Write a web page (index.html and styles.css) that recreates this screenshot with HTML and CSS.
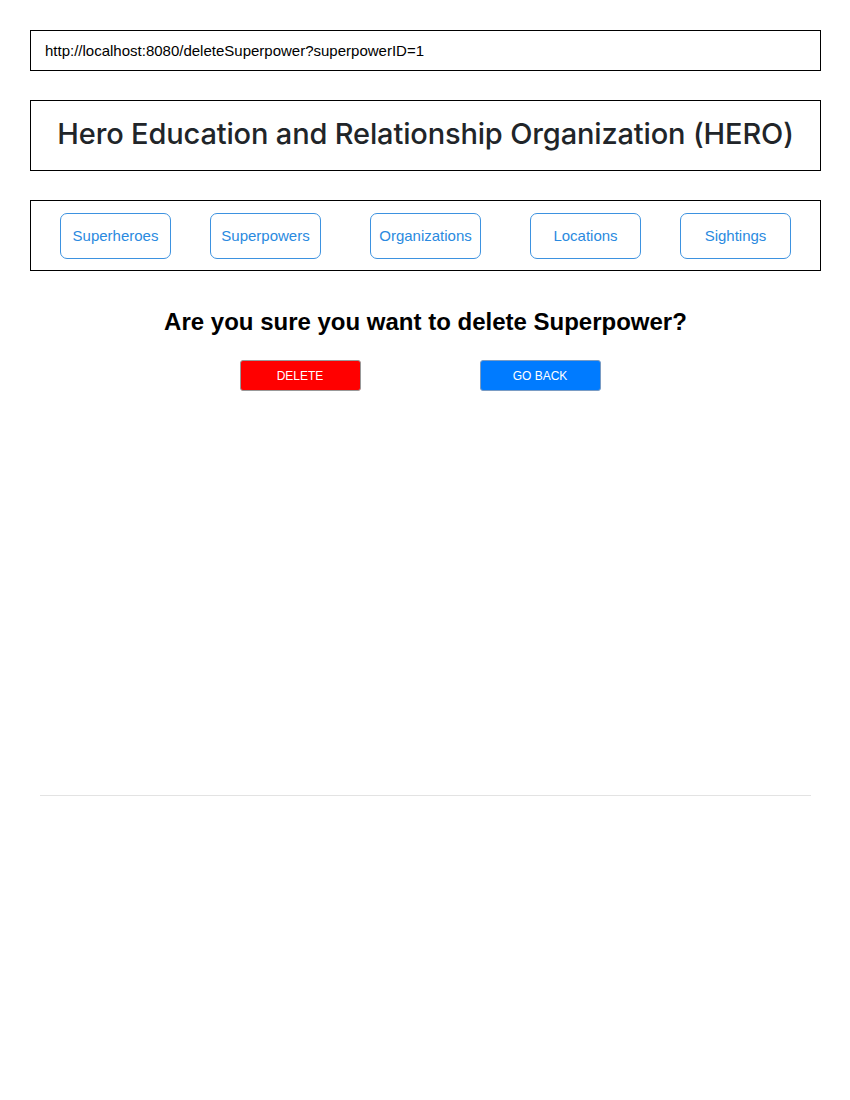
FILE: index.html
```html
<!DOCTYPE html>
<html>
<head>
<meta charset="utf-8">
<link rel="stylesheet" href="styles.css">
</head>
<body>
<div class="page">
  <div class="box url">http://localhost:8080/deleteSuperpower?superpowerID=1</div>
  <div class="box title"><h1>Hero Education and Relationship Organization (HERO)</h1></div>
  <div class="box nav">
    <a class="navbtn n1">Superheroes</a>
    <a class="navbtn n2">Superpowers</a>
    <a class="navbtn n3">Organizations</a>
    <a class="navbtn n4">Locations</a>
    <a class="navbtn n5">Sightings</a>
  </div>
  <h2 class="question">Are you sure you want to delete Superpower?</h2>
  <div class="actions">
    <button class="btn delete">DELETE</button>
    <button class="btn back">GO BACK</button>
  </div>
  <div class="spacer"></div>
  <hr class="rule">
</div>
</body>
</html>
```
FILE: styles.css
```css
html, body { margin: 0; padding: 0; background: #fff; }
body { font-family: "Liberation Sans", Arial, sans-serif; }
.page { padding: 30px 29px 0 30px; }
.box { border: 1px solid #000; box-sizing: border-box; }
.url { height: 41px; display: flex; align-items: center; padding-left: 14px; font-size: 15px; color: #000; }
.title { margin-top: 29px; height: 71px; display: flex; align-items: center; justify-content: center; padding-bottom: 4px; }
.title h1 { margin: 0; font-family: Inter, "Noto Sans", sans-serif; font-weight: 500; font-size: 29px; color: #212529; letter-spacing: -0.15px; }
.nav { margin-top: 29px; height: 71px; display: flex; align-items: center; padding-left: 29px; }
.navbtn { width: 111px; height: 46px; box-sizing: border-box; border: 1px solid #3d92e0; border-radius: 7px; display: flex; align-items: center; justify-content: center; font-size: 15px; color: #2a8ae0; }
.n2 { margin-left: 39px; }
.n3 { margin-left: 49px; }
.n4 { margin-left: 49px; }
.n5 { margin-left: 39px; }
.question { margin: 37px 0 0 0; text-align: center; font-size: 24px; font-weight: bold; color: #000; line-height: 28px; }
.actions { margin-top: 24px; display: flex; justify-content: center; gap: 119px; padding-right: 11px; }
.btn { width: 121px; height: 31px; border: 1px solid #999; border-radius: 3px; color: #fff; font-family: "Liberation Sans", Arial, sans-serif; font-size: 12px; padding: 0; }
.delete { background: #ff0000; }
.back { background: #007bff; border-color: #7a9cc4; }
.spacer { height: 404px; }
.rule { margin: 0 10px; border: 0; border-top: 1px solid #e3e3e3; }
```
